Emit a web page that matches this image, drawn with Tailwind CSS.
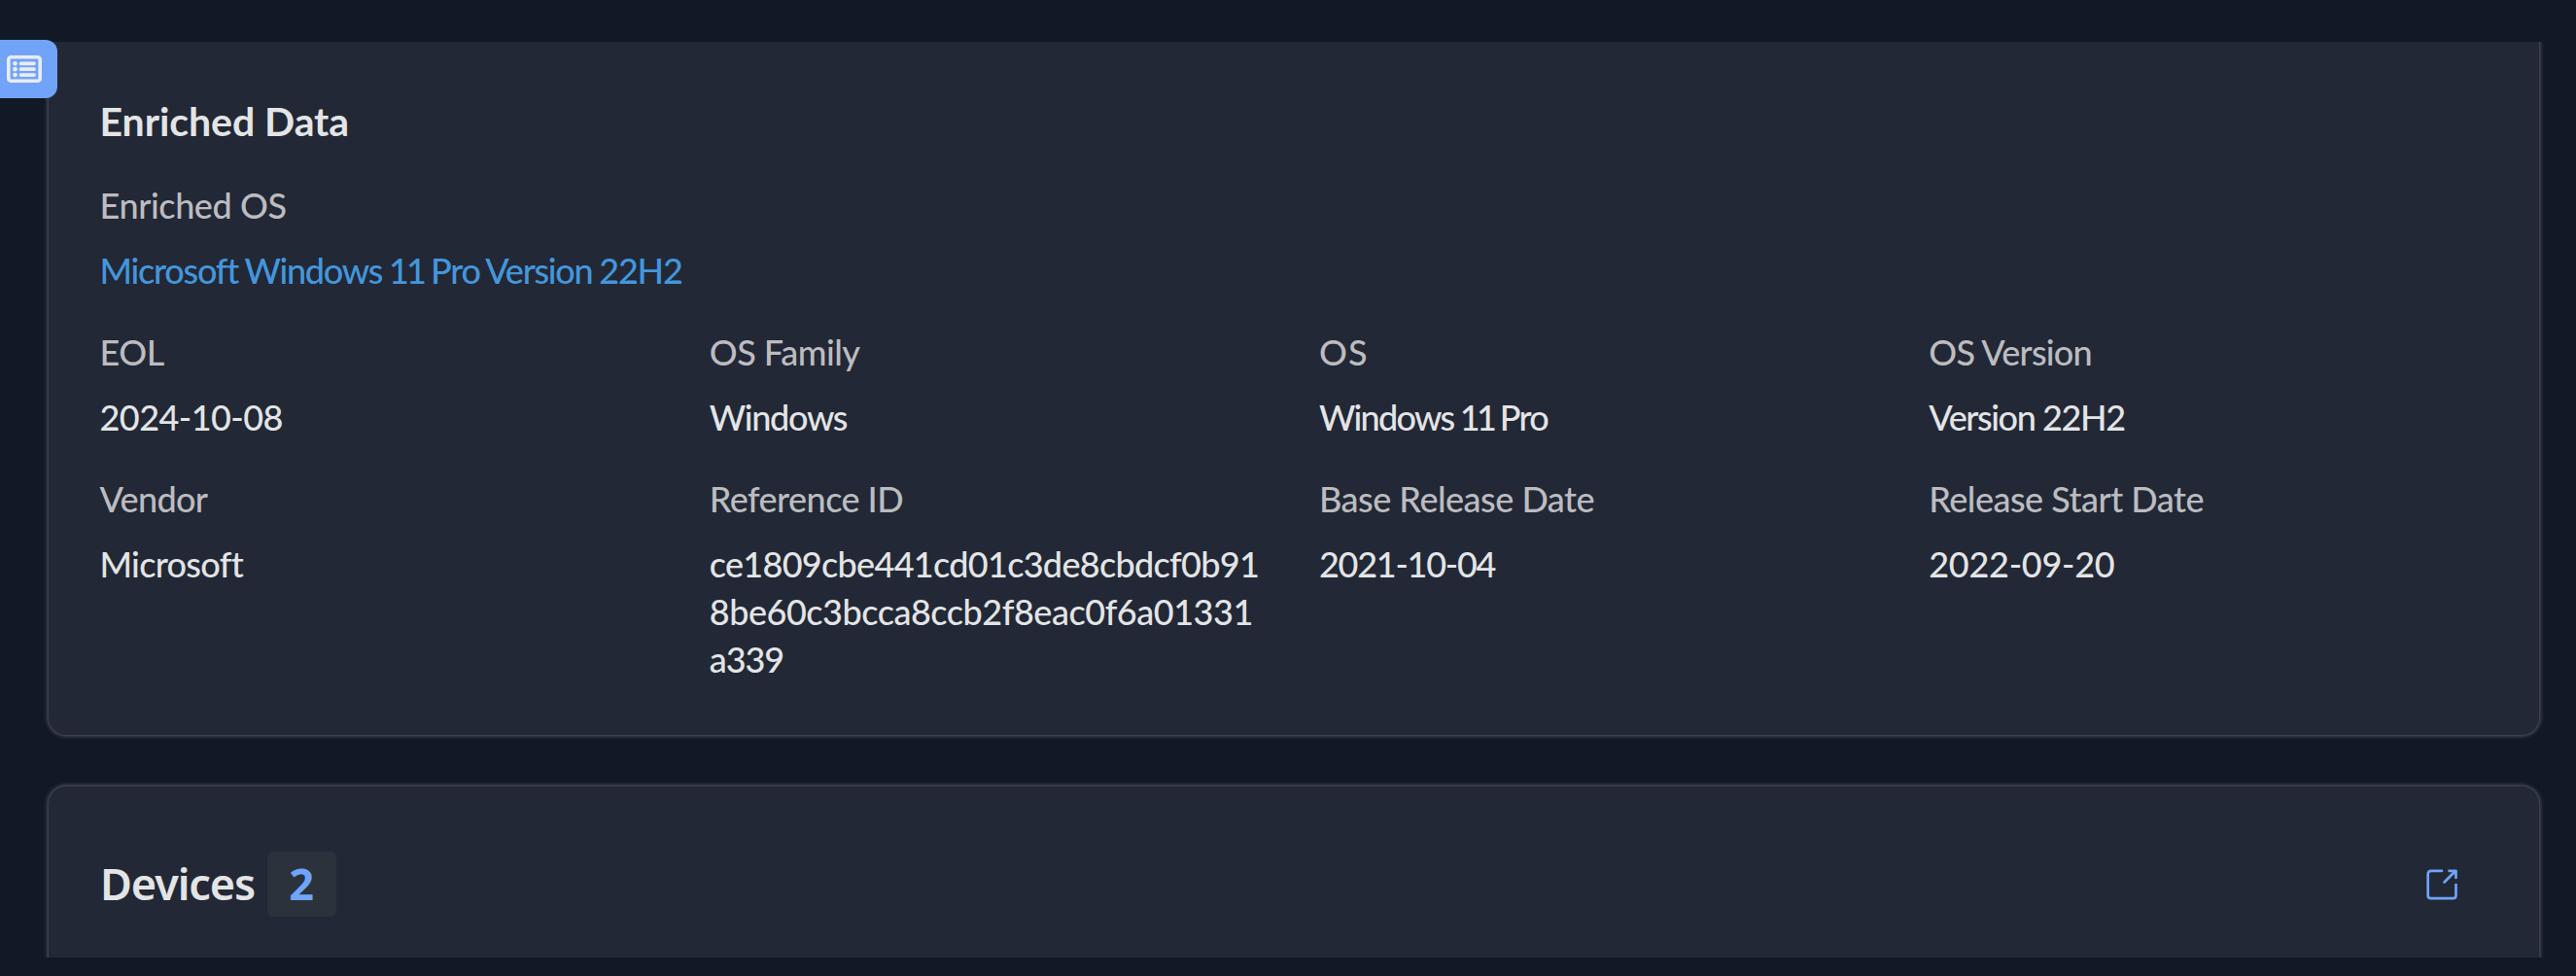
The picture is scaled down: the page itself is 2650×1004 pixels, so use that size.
<!DOCTYPE html>
<html lang="en">
<head>
<meta charset="utf-8">
<title>Enriched Data</title>
<script src="https://cdn.jsdelivr.net/npm/@tailwindcss/browser@4"></script>
</head>
<body class="bg-[#121926] font-['Lato',sans-serif] text-[#e3e4e6] overflow-hidden">
<div class="relative h-[1004px] w-[2650px] pt-[43px]">
  <main class="h-[942px] overflow-hidden pl-[50px]">
    <section class="h-[713px] w-[2562px] rounded-b-[18px] bg-[#222835] pr-[51.5px] pl-[52.5px] pt-[57px] shadow-[0_0_0_1px_#3c404a,0_0_4px_1px_#5a5c66]">
      <h2 class="h-[61px] text-[41px] leading-[49px] font-bold tracking-[-0.05px]">Enriched Data</h2>
      <div class="mt-[26px] text-[36px] leading-[49px] font-medium">
        <div class="text-[#bcbcc0] tracking-[-0.4px]">Enriched OS</div>
        <a class="mt-[18px] block tracking-[-1.25px] [word-spacing:-1px] text-[#4496dc]">Microsoft Windows <span class="tracking-[-2.8px]">11</span> Pro Version 22H2</a>
      </div>
      <dl class="mt-[35px] grid grid-cols-4 gap-x-[51px] gap-y-[35px] text-[36px] leading-[49px] font-medium">
        <div><dt class="tracking-[-0.4px] text-[#bcbcc0]">EOL</dt><dd class="mt-[18px] tracking-[-0.55px]">2024-10-08</dd></div>
        <div><dt class="tracking-[-0.5px] text-[#bcbcc0]">OS Family</dt><dd class="mt-[18px] tracking-[-1.3px]">Windows</dd></div>
        <div><dt class="tracking-[1px] text-[#bcbcc0]">OS</dt><dd class="mt-[18px] tracking-[-1.75px] [word-spacing:-1px]">Windows <span class="tracking-[-3.5px]">11</span> Pro</dd></div>
        <div><dt class="tracking-[-0.75px] text-[#bcbcc0]">OS Version</dt><dd class="mt-[18px] tracking-[-1.4px]">Version 22H2</dd></div>
        <div><dt class="tracking-[-0.7px] text-[#bcbcc0]">Vendor</dt><dd class="mt-[18px] tracking-[-0.69px]">Microsoft</dd></div>
        <div><dt class="tracking-[-0.55px] text-[#bcbcc0]">Reference ID</dt><dd class="mt-[18px] whitespace-nowrap"><span class="tracking-[-0.7px]">ce1809cbe441cd01c3de8cbdcf0b91</span><br><span class="tracking-[-0.47px]">8be60c3bcca8ccb2f8eac0f6a01331</span><br><span class="tracking-[-1.08px]">a339</span></dd></div>
        <div><dt class="tracking-[-0.5px] text-[#bcbcc0]">Base Release Date</dt><dd class="mt-[18px] tracking-[-1.27px]">2021-10-04</dd></div>
        <div><dt class="tracking-[-0.5px] text-[#bcbcc0]">Release Start Date</dt><dd class="mt-[18px] tracking-[-0.27px]">2022-09-20</dd></div>
      </dl>
    </section>
    <section class="mt-[53px] flex h-[219px] w-[2562px] items-start justify-between rounded-t-[18px] bg-[#222835] pt-[67px] pr-[84px] pl-[53px] shadow-[0_0_0_1px_#3c404a,0_0_4px_1px_#5a5c66]">
      <h2 class="flex items-center font-['Noto_Sans',sans-serif] text-[45px] leading-[64px] font-semibold">
        <span class="w-[172px] -mt-[2px] tracking-[-1.1px]">Devices</span>
        <span class="flex h-[67px] w-[71px] items-center justify-center rounded-md bg-[#2b323b] pb-[2px] pr-px font-bold text-[#70a4f8]">2</span>
      </h2>
      <svg class="mt-[18px] size-8" viewBox="0 0 32 32" fill="none" stroke="#70a4f8" stroke-width="2.7" stroke-linecap="round" stroke-linejoin="round"><path d="M16 1.800H5Q1.700 1.800 1.700 5V27Q1.700 30.200 5 30.200H27.300Q30.500 30.200 30.500 27V16M18.500 13.500L30 2M23.500 1.800H30.500V9"/><path d="M26.500 2h4v4z" fill="#70a4f8" stroke-width="1"/></svg>
    </section>
  </main>
  <button class="absolute top-[41px] left-0 flex h-[60px] w-[59px] items-center rounded-r-[12px] bg-[#71a4f8] pl-[7px]" aria-label="List">
    <svg class="h-7 w-9" viewBox="0 0 36 28" fill="none" stroke="#e9ebf1" stroke-linecap="round"><rect x="1.800" y="1.800" width="32.400" height="24.400" rx="2.500" stroke-width="3.600"/><path d="M14.500 8.300H28M14.500 14.200H28M14.500 20.100H28" stroke-width="3.800"/><path d="M8.500 8.300h.01M8.500 14.200h.01M8.500 20.100h.01" stroke-width="4.800"/></svg>
  </button>
</div>
</body>
</html>
